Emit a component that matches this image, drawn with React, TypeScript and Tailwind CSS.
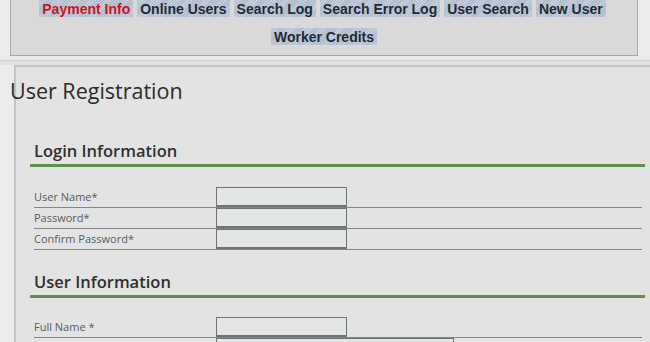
const navTop = ["Payment Info", "Online Users", "Search Log", "Search Error Log", "User Search", "New User"];

const hatch =
  "bg-[repeating-linear-gradient(135deg,#c6cfdc_0px,#c6cfdc_1px,#aeb9ca_1px,#aeb9ca_2px)]";

function NavLink({ label, active }: { label: string; active?: boolean }) {
  return (
    <a
      href="#"
      className={`${hatch} flex h-[17px] items-center px-[3px] text-[14px] font-bold leading-none font-['Liberation_Sans',Arial,sans-serif] ${
        active ? "text-[#c8141e]" : "text-[#1f2a36]"
      }`}
    >
      {label}
    </a>
  );
}

function Row({ label, inputWidth = "w-[131px]" }: { label: string; inputWidth?: string }) {
  return (
    <div className="mr-[8px] flex h-[21px] items-end border-b border-[#858585]">
      <span className="w-[182px] pb-[5px] text-[11px] leading-none text-[#5a5a5a]">{label}</span>
      <div className={`${inputWidth} h-[20px] border border-b-2 border-[#6d7479] bg-[#e4e6e6]`} />
    </div>
  );
}

function SectionHead({ title }: { title: string }) {
  return (
    <div className="ml-[14px] mr-[5px] border-b-[3px] border-[#5c914a] pb-[3px] pl-[4px]">
      <h2 className="text-[16.5px] font-semibold leading-[20px] text-[#2f2f2f]">{title}</h2>
    </div>
  );
}

export default function App() {
  return (
    <div className="h-[342px] w-[650px] overflow-hidden bg-[#ebebeb] font-['Open_Sans',sans-serif]">
      <div className="ml-[10px] h-[56px] w-[628px] border border-t-0 border-[#a7a7a7] bg-[#d9d9d9]">
        <div className="flex justify-center gap-x-[4px] pr-[3px]">
          {navTop.map((n, i) => (
            <NavLink key={n} label={n} active={i === 0} />
          ))}
        </div>
        <div className="mt-[11px] flex justify-center">
          <NavLink label="Worker Credits" />
        </div>
      </div>

      <div className="mt-[4px] h-[5px] border-t border-[#cdcdcd] bg-[#e1e1e1]" />

      <div className="ml-[14px] h-[280px] border-l-2 border-t-2 border-[#c3c3c3] bg-[#e3e3e3]">
        <h1 className="-ml-[6px] mt-[10px] text-[21.5px] leading-[28px] text-[#2b2b2b]">User Registration</h1>

        <div className="mt-[36px]">
          <SectionHead title="Login Information" />
        </div>
        <div className="ml-[18px] mt-[20px]">
          <Row label="User Name*" />
          <Row label="Password*" />
          <Row label="Confirm Password*" />
        </div>

        <div className="mt-[22px]">
          <SectionHead title="User Information" />
        </div>
        <div className="ml-[18px] mt-[19px]">
          <Row label="Full Name *" />
          <Row label="Address *" inputWidth="w-[238px]" />
        </div>
      </div>
    </div>
  );
}
